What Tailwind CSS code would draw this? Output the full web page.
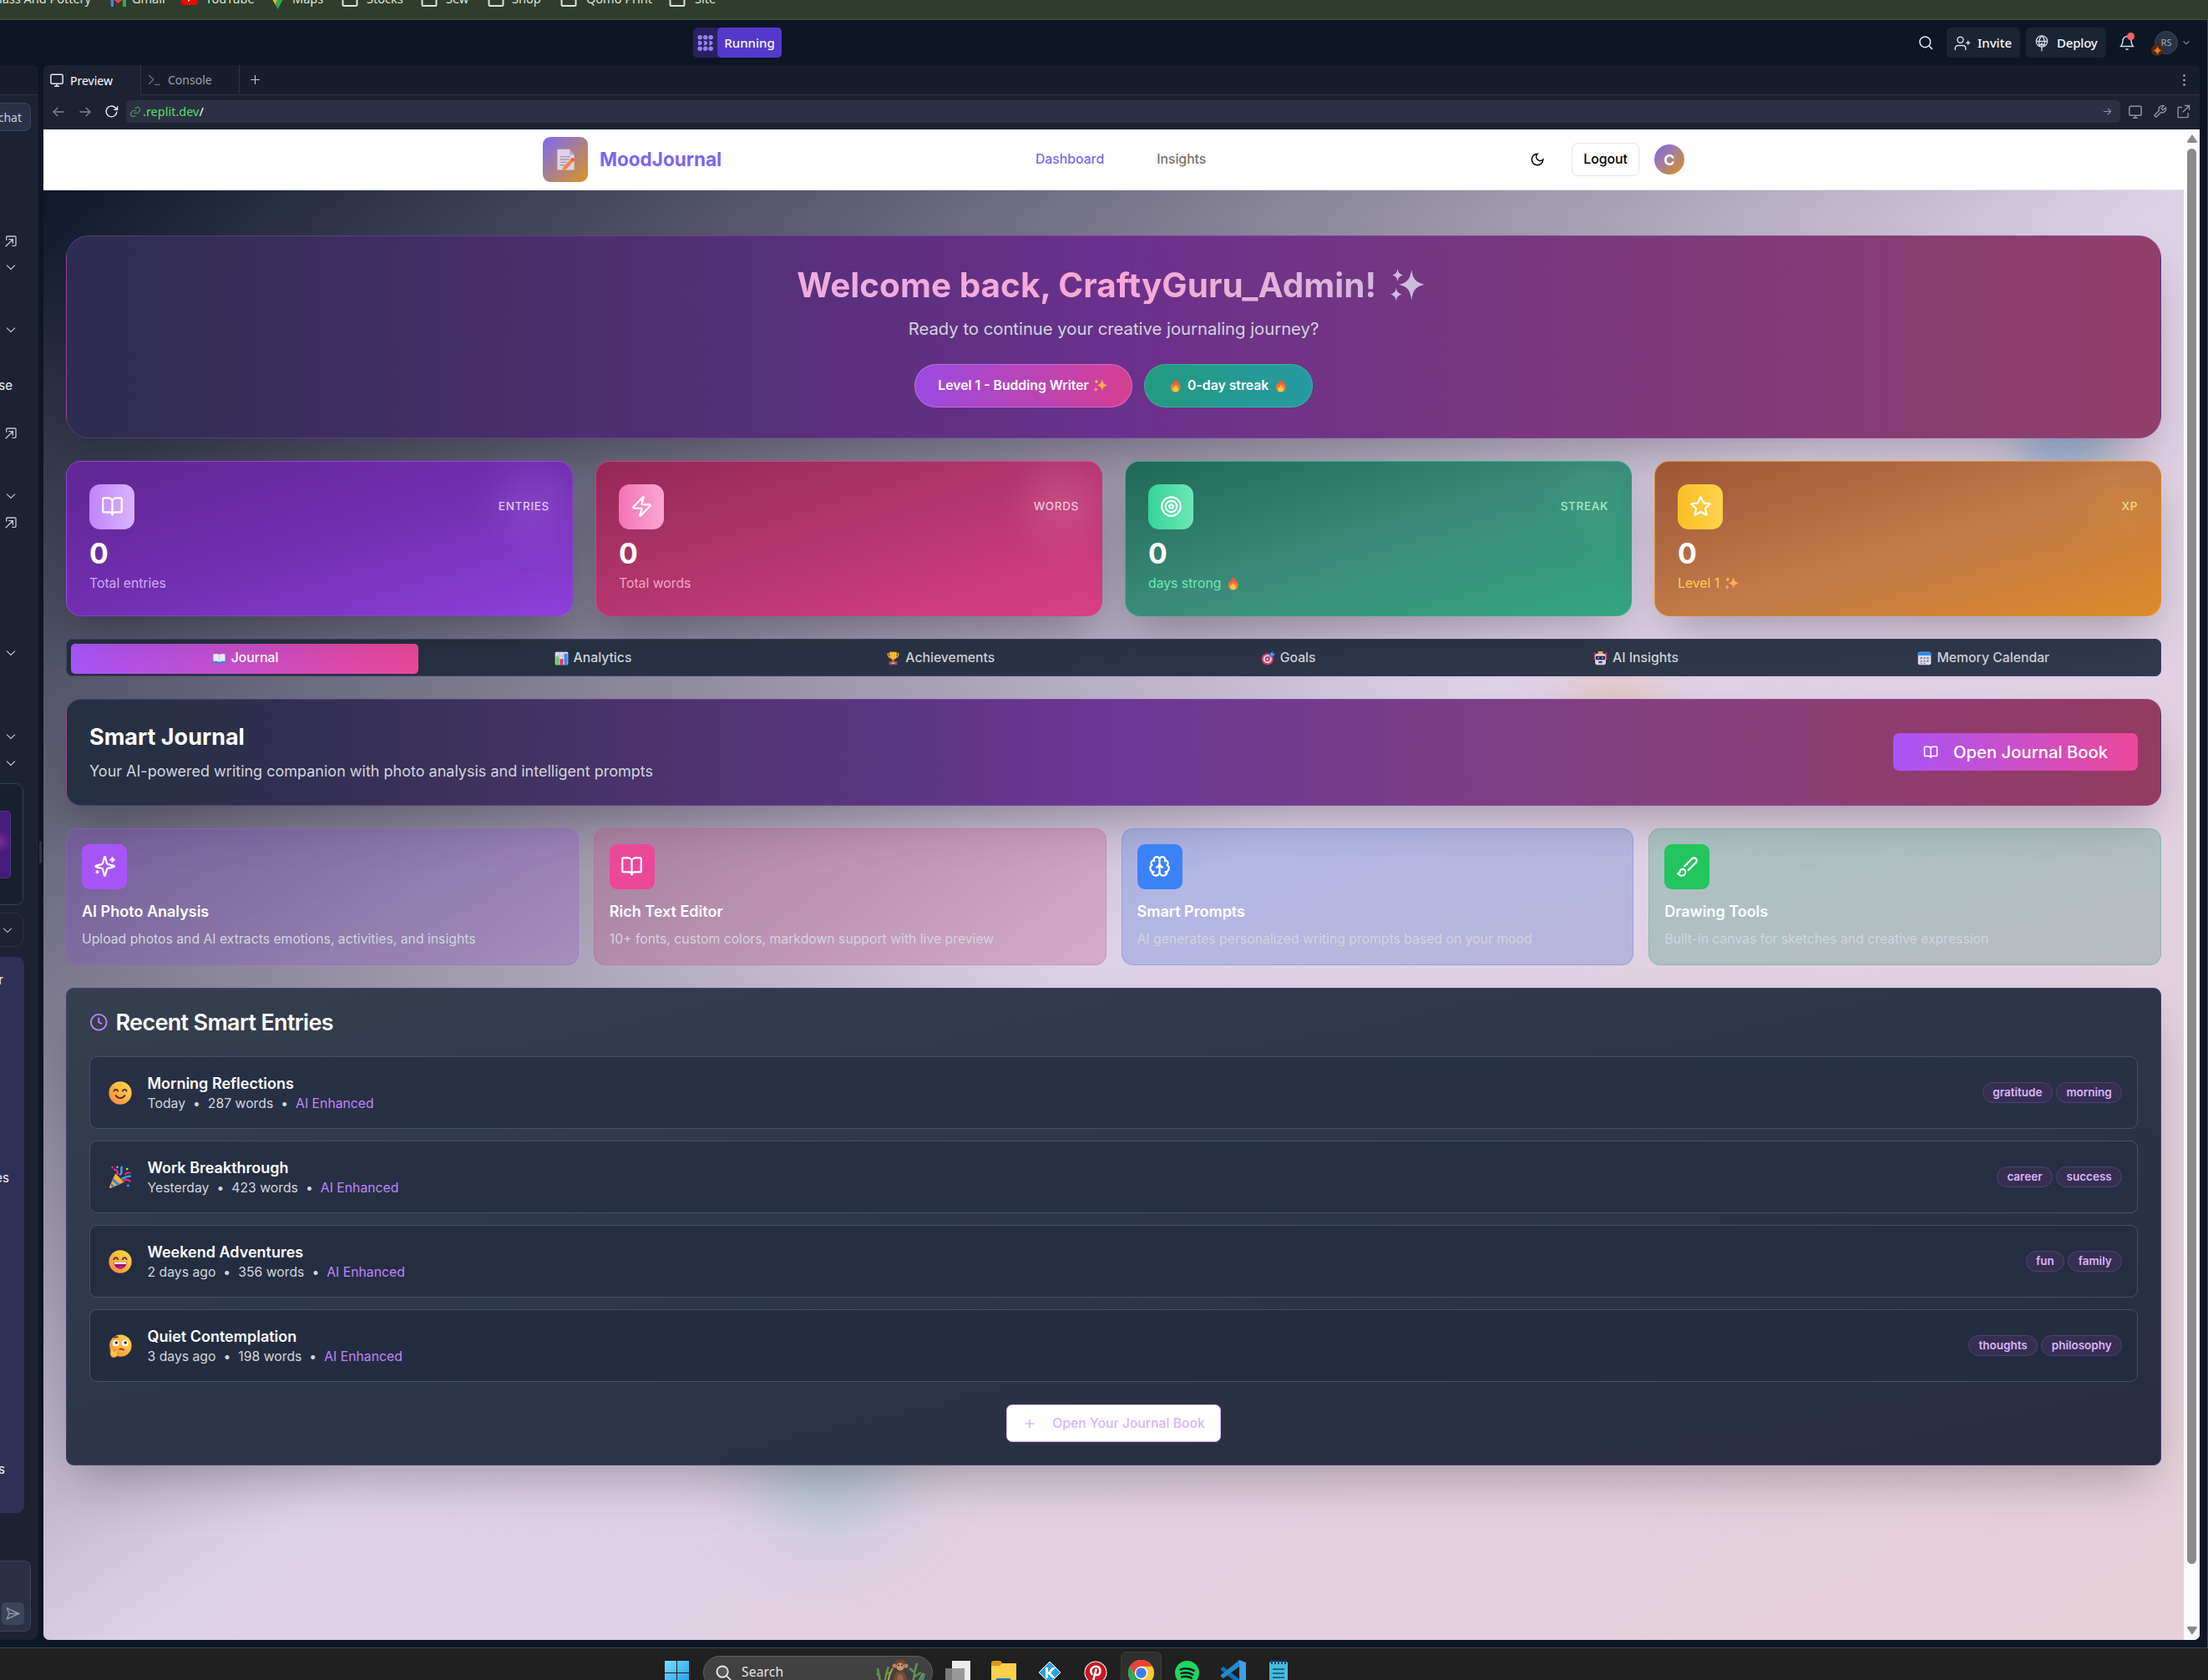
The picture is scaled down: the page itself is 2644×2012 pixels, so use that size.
<!DOCTYPE html>
<html lang="en" class="text-[18px]">
<head>
<meta charset="utf-8">
<title>MoodJournal</title>
<script src="https://cdn.jsdelivr.net/npm/@tailwindcss/browser@4"></script>
</head>
<body class="w-[2644px] h-[2012px] overflow-hidden bg-[#0e1525] font-['Inter',sans-serif]">

<svg class="absolute w-0 h-0">
  <defs>
    <linearGradient id="gFire" x1="0" y1="0" x2="0" y2="1"><stop offset="0" stop-color="#e8453c"/><stop offset="1" stop-color="#ff9a2e"/></linearGradient>
    <linearGradient id="gFace" x1="1" y1="0" x2="0" y2="1"><stop offset="0" stop-color="#ffe04a"/><stop offset=".6" stop-color="#ffab3c"/><stop offset="1" stop-color="#f37a4e"/></linearGradient>
    <linearGradient id="gSpark" x1="0" y1="0" x2="0" y2="1"><stop offset="0" stop-color="#ffd23a"/><stop offset="1" stop-color="#ff8a6a"/></linearGradient>
    <linearGradient id="gWin" gradientUnits="userSpaceOnUse" x1="0" y1="0" x2="29" y2="29"><stop offset="0" stop-color="#7fdcff"/><stop offset="1" stop-color="#1a9bef"/></linearGradient>
    <linearGradient id="gTitle" x1="0" y1="0" x2="1" y2="0"><stop offset="0" stop-color="#d0badf"/><stop offset="1" stop-color="#cabde2"/></linearGradient>
  </defs>
  <symbol id="star4" viewBox="0 0 24 24"><path d="M15 1.500c1 6.500 2.500 8.500 8.700 10.300C17.500 13.500 16 15.500 15 22.500 14 15.500 12.500 13.500 6.500 11.800 12.500 10.200 14 8 15 1.500z"/><path d="M5.500 1c.5 2.800 1 3.500 3.600 4.400-2.600.9-3.100 1.700-3.600 4.400-.5-2.700-1-3.500-3.500-4.400C4.500 4.500 5 3.800 5.500 1zM4.500 14c.5 2.900 1.200 3.600 3.900 4.600-2.700.9-3.400 1.700-3.900 4.500-.5-2.800-1.200-3.600-3.900-4.500C3.300 17.600 4 16.900 4.500 14z"/></symbol>
  <symbol id="fire" viewBox="0 0 24 24"><path fill="url(#gFire)" d="M13 1c1 4 7 7 7 14a8 8 0 0 1-16 0c0-3 1-5.500 2.500-7 .2 1.500.8 2.500 1.500 3C8 7 10 3 13 1z"/><path fill="#ffc83a" d="M12.500 11c.5 2.500 4 3.500 4 7a4.500 4.500 0 0 1-9 0c0-1.800 1-3 2-4 .3.800.7 1.300 1.200 1.500 0-1.800.8-3.500 1.800-4.500z"/></symbol>
  <symbol id="bookE" viewBox="0 0 24 24"><path fill="#2b8fe0" d="M1 6h22v14H1z"/><path fill="#eef0f8" d="M2 5c4-1 7-1 10 .8C15 4 18 4 22 5v12c-4-.8-7-.8-10 1-3-1.800-6-1.800-10-1z"/><path stroke="#c3c7da" d="M12 6v12"/></symbol>
  <symbol id="chart" viewBox="0 0 24 24"><rect x="1" y="1" width="22" height="22" rx="2" fill="#e3def0"/><path stroke="#b9b2cc" stroke-width="1" d="M1 8h22M1 15h22M8.500 1v22M15.500 1v22"/><path fill="#6bcf5a" d="M2 9h5.500v14H2z"/><path fill="#e5396b" d="M9 13h5.500v10H9z"/><path fill="#2f8ff0" d="M16.500 4H22v19h-5.500z"/></symbol>
  <symbol id="trophy" viewBox="0 0 24 24"><path fill="none" stroke="#f5a623" stroke-width="2" d="M6 4H3c0 4 1 6 5 7M18 4h3c0 4-1 6-5 7"/><path fill="#fcc02e" d="M6 1h12v6c0 4-2.500 7-6 7s-6-3-6-7z"/><path fill="#e8902a" d="M10.500 13h3v4h-3z"/><path fill="#a0506a" d="M5 17h14v6H5z"/><path fill="#fcc02e" d="M9 19h6v2H9z"/></symbol>
  <symbol id="targetE" viewBox="0 0 24 24"><circle cx="11" cy="13" r="10" fill="#e23a66"/><circle cx="11" cy="13" r="7" fill="#f0e4f2"/><circle cx="11" cy="13" r="4.500" fill="#e23a66"/><circle cx="11" cy="13" r="1.800" fill="#fff"/><path stroke="#2f8ff0" stroke-width="2.500" d="M11 13l8-8"/><path fill="#3fa5f5" d="M16 3l4-3v4h4l-3 4-5-1z"/></symbol>
  <symbol id="robot" viewBox="0 0 24 24"><path fill="#f5b52a" d="M8 0h8v4H8z"/><path fill="#e2325e" d="M1 2h3v12H1zM20 2h3v12h-3z"/><rect x="3" y="4" width="18" height="19" rx="4" fill="#ddd5ec"/><rect x="4" y="8" width="16" height="6.500" rx="2" fill="#2c2846"/><path fill="#3aa7f5" d="M7 10h3v2.500H7zM14 10h3v2.500h-3z"/><path fill="#443a5c" d="M9 17h6v3H9z"/></symbol>
  <symbol id="cal" viewBox="0 0 24 24"><rect x="1" y="1" width="22" height="22" rx="3" fill="#e6e0f3"/><path fill="#2f92f5" d="M1 7V4a3 3 0 0 1 3-3h16a3 3 0 0 1 3 3v3z"/><path fill="#8d86a8" d="M5 10h3v3H5zM10.500 10h3v3h-3zM16 10h3v3h-3zM5 15h3v3H5zM10.500 15h3v3h-3zM5 19.500h3v2H5zM10.500 19.500h3v2h-3z"/><path fill="#2f92f5" d="M16 15h3v3h-3z"/></symbol>
  <symbol id="memo" viewBox="0 0 24 24"><path fill="#ddd3e4" d="M3 1h13l5 6v16H3z"/><path fill="#b7aac4" d="M16 1l5 6h-5z"/><path stroke="#a497b4" stroke-width="1.200" d="M6 9h11M6 12h10M6 15h7M6 18h5"/><path fill="#fb8445" d="M19 10l3 2-9 10-5 1.500L10 19z"/><path fill="#f0583c" d="M19 10l3 2-2 2.300-3-2z"/></symbol>
  <symbol id="smile" viewBox="0 0 24 24"><circle cx="12" cy="12" r="11.700" fill="url(#gFace)"/><path fill="none" stroke="#4b2e3a" stroke-width="1.600" stroke-linecap="round" d="M5.500 10c.5-2 3.500-2 4 0M14.500 10c.5-2 3.500-2 4 0M7.500 14.500c2 3.500 7 3.500 9 0"/></symbol>
  <symbol id="laugh" viewBox="0 0 24 24"><circle cx="12" cy="12" r="11.700" fill="url(#gFace)"/><path fill="none" stroke="#4b2e3a" stroke-width="1.600" stroke-linecap="round" d="M5.500 9.500c.5-2.200 3.500-2.200 4 0M14.500 9.500c.5-2.200 3.500-2.200 4 0"/><path fill="#9c1668" d="M5.500 12.500h13c0 4-3 7-6.500 7s-6.500-3-6.500-7z"/><path fill="#fff" d="M6 12.500h12v2H6z"/><path fill="#d0208a" d="M8.500 18c2-2 5-2 7 0-2 2-5 2-7 0z"/></symbol>
  <symbol id="think" viewBox="0 0 24 24"><circle cx="12.300" cy="11.700" r="11.300" fill="url(#gFace)"/><circle cx="7.500" cy="9" r="3.300" fill="#fff"/><circle cx="16.800" cy="9" r="3.300" fill="#fff"/><circle cx="8" cy="8.500" r="1.500" fill="#3c2a36"/><circle cx="17.300" cy="8.500" r="1.500" fill="#3c2a36"/><path fill="none" stroke="#4b2e3a" stroke-width="1.300" stroke-linecap="round" d="M6 3.600c1-1 2.500-1.200 3.500-.8M10.500 16c1.500-1.500 3.800-1.300 5 .2"/><path fill="#ffc542" stroke="#e98a35" stroke-width=".7" d="M2 15.500c0-1.800 2.200-1.800 2.400 0l.6 2 5-2c1.500-.5 2.200 1.300.8 2l-2.300 1.300c1.500.7 1 4.200-2.500 4.700-3 .3-4-1.500-4-4z"/></symbol>
  <symbol id="party" viewBox="0 0 24 24"><path fill="#fbb130" d="M7 8l9 9-13.500 6c-1 .4-2-.5-1.500-1.500z"/><path fill="#4a7fe0" d="M5 13l7 6-3 1.400-5.300-4.600zM3 18l3.500 3.500-2.500 1L2 20.500z"/><path fill="none" stroke="#e32c86" stroke-width="2" stroke-linecap="round" d="M9 9c1-3-1-5-3-5M15 16c2-2 5-2 7 0"/><path fill="none" stroke="#e32c86" stroke-width="1.800" stroke-linecap="round" d="M17 9c1-1.500 3-2 5-1.500"/><path fill="none" stroke="#3a9df0" stroke-width="2.200" stroke-linecap="round" d="M12 9c3-2 0-4 1.500-7.500M14 13c3 0 3-2.500 8-2"/><circle cx="4" cy="1.800" r="1.200" fill="#e32c86"/><circle cx="19" cy="3.500" r="1.200" fill="#fbc530"/><circle cx="20" cy="20.500" r="1.200" fill="#3a9df0"/><circle cx="9" cy="1.500" r="1" fill="#fbc530"/></symbol>

  <symbol id="book" viewBox="0 0 24 24"><path d="M12 7v14M3 18a1 1 0 0 1-1-1V4a1 1 0 0 1 1-1h5a4 4 0 0 1 4 4 4 4 0 0 1 4-4h5a1 1 0 0 1 1 1v13a1 1 0 0 1-1 1h-6a3 3 0 0 0-3 3 3 3 0 0 0-3-3z"/></symbol>
  <symbol id="chev" viewBox="0 0 24 24"><path d="m3.500 8 8.500 8 8.500-8"/></symbol>
  <symbol id="openin" viewBox="0 0 24 24"><path d="M4 10V4.500A1.500 1.500 0 0 1 5.500 3h14A1.500 1.500 0 0 1 21 4.500v14a1.500 1.500 0 0 1-1.500 1.500H14M2.500 21.500l13-13M8 8.500h7.500V16"/></symbol>
  <symbol id="monitor" viewBox="0 0 24 24"><rect x="2.500" y="3" width="19" height="14.500" rx="2"/><path d="M12 17.500V21.500M8 21.500h8"/></symbol>
  <symbol id="folder" viewBox="0 0 20 18"><path d="M1.500 14.500V2H8l2 2h8.500v10.500a1.500 1.500 0 0 1-1.500 1.500H3a1.500 1.500 0 0 1-1.500-1.500z"/></symbol>
</svg>

<!-- bookmarks bar -->
<div class="h-[24px] bg-[#303d2d] border-b border-[#43513f] overflow-hidden font-['Noto_Sans',sans-serif] text-[14.5px] text-[#dfe4d8]">
  <div class="flex items-center h-[24px] -mt-[14px] whitespace-nowrap leading-[24px]">
    <div class="w-[132px] shrink-0 pr-[23px] flex justify-end overflow-hidden"><span>Glass And Pottery</span></div>
    <div class="w-[85px] shrink-0 flex gap-[7px] items-center"><svg class="w-[19px] h-[16px] mt-[3px]" viewBox="0 0 19 16"><path fill="#4285f4" d="M0 2h4v14H1z"/><path fill="#34a853" d="M15 2h4v14h-4z"/><path fill="#ea4335" d="M2 1l7.500 6L17 1v5l-7.500 6L2 6z"/></svg><span>Gmail</span></div>
    <div class="w-[109px] shrink-0 flex gap-[9px] items-center"><svg class="w-[20px] h-[15px] mt-[1px]" viewBox="0 0 20 15"><rect width="20" height="15" rx="4" fill="#f00"/><path fill="#fff" d="M8 4l5 3.500L8 11z"/></svg><span>YouTube</span></div>
    <div class="w-[83px] shrink-0 flex gap-[11px] items-center"><svg class="w-[13px] h-[20px] mt-[5px]" viewBox="0 0 13 20"><path fill="#34a853" d="M0 8h13L6.500 20z"/><path fill="#fbbc04" d="M0 8l6 0-2.500 6z"/></svg><span>Maps</span></div>
    <div class="w-[95px] shrink-0 flex gap-[10px] items-center"><svg class="w-[20px] h-[18px] mt-[3px] fill-none stroke-[#dfe4d8] stroke-2"><use href="#folder"/></svg><span>Stocks</span></div>
    <div class="w-[80px] shrink-0 flex gap-[10px] items-center"><svg class="w-[20px] h-[18px] mt-[3px] fill-none stroke-[#dfe4d8] stroke-2"><use href="#folder"/></svg><span>Sew</span></div>
    <div class="w-[87px] shrink-0 flex gap-[9px] items-center"><svg class="w-[20px] h-[18px] mt-[3px] fill-none stroke-[#dfe4d8] stroke-2"><use href="#folder"/></svg><span>Shop</span></div>
    <div class="w-[130px] shrink-0 flex gap-[11px] items-center"><svg class="w-[20px] h-[18px] mt-[3px] fill-none stroke-[#dfe4d8] stroke-2"><use href="#folder"/></svg><span>Qomo Print</span></div>
    <div class="shrink-0 flex gap-[11px] items-center"><svg class="w-[20px] h-[18px] mt-[3px] fill-none stroke-[#dfe4d8] stroke-2"><use href="#folder"/></svg><span>Site</span></div>
  </div>
</div>

<!-- workspace header -->
<div class="h-[54px] flex items-center justify-between pl-[830px] pr-[20px] border-r border-[#3a4a48] font-['Noto_Sans',sans-serif] text-[15px] font-medium text-[#f5f9fc]">
  <div class="h-[36px] w-[106px] rounded-[5px] bg-[#2a2160] flex">
    <div class="w-[29px] flex items-center justify-center"><svg class="w-[19px] h-[19px] fill-[#9580f5]" viewBox="0 0 18 18"><ellipse cx="3" cy="2.700" rx="2.600" ry="2.600"/><ellipse cx="9.200" cy="2.700" rx="2.600" ry="2.600"/><ellipse cx="15.300" cy="2.700" rx="2.600" ry="2.600"/><path d="M1 6.500c3 0 4.500 1 4.500 2.500S4 11.500 1 11.500zM7 6.300c3 0 4.600 1.200 4.600 2.700S10 11.700 7 11.700c1.200-1.800 1.200-3.600 0-5.400zM13 6.300c3 0 4.600 1.200 4.600 2.700s-1.600 2.700-4.600 2.700c1.200-1.800 1.200-3.600 0-5.400z"/><ellipse cx="3" cy="15.300" rx="2.600" ry="2.600"/><ellipse cx="9.200" cy="15.300" rx="2.600" ry="2.600"/><ellipse cx="15.300" cy="15.300" rx="2.600" ry="2.600"/></svg></div>
    <div class="flex-1 rounded-[5px] bg-[#5438cc] flex items-center justify-center pt-[1px]">Running</div>
  </div>
  <div class="flex items-center h-[36px]">
    <svg class="w-[18px] h-[18px] mr-[16px] fill-none stroke-[#e6ebf0] stroke-2" viewBox="0 0 24 24"><circle cx="11" cy="11" r="8.500"/><path d="m17.500 17.500 5 5"/></svg>
    <div class="w-[88px] h-[36px] rounded-[5px] bg-[#1c2333] flex items-center pl-[9px] gap-[8px] pt-[1px]"><svg class="w-[20px] h-[20px] fill-none stroke-[#d5dae2] stroke-[1.8]" viewBox="0 0 24 24"><circle cx="9" cy="7" r="4.200"/><path d="M1.500 21.500v-2.500a4 4 0 0 1 4-4h7a4 4 0 0 1 4 4v2.500M20 8v6M17 11h6"/></svg>Invite</div>
    <div class="ml-[7px] w-[96px] h-[36px] rounded-[5px] bg-[#1c2333] flex items-center pl-[9px] gap-[8px] pt-[1px]"><svg class="w-[20px] h-[20px] fill-none stroke-[#d5dae2] stroke-[1.6]" viewBox="0 0 24 24"><circle cx="12" cy="9" r="8"/><path d="M4 9h16M9 16c-1.500-3-2-10 3-15 5 5 4.500 12 3 15M12 12v11M9 15l3-3 3 3"/></svg><span class="tracking-[-0.2px]">Deploy</span></div>
    <div class="relative ml-[15px] w-[20px] h-[20px]"><svg class="w-[20px] h-[20px] fill-none stroke-[#d5dae2] stroke-[1.8]" viewBox="0 0 24 24"><path d="M6 9a6 6 0 0 1 12 0c0 6 2 7 3 8.500H3C4 16 6 15 6 9M10 21.500h4"/></svg><div class="absolute left-[10px] -top-[2px] w-[9px] h-[9px] rounded-full bg-[#ff6166]"></div></div>
    <div class="relative ml-[23px] w-[28px] h-[28px] rounded-full bg-[#2b3245] border border-[#3c445c] text-[11px] font-normal text-[#a2acbb] flex items-center justify-center">RS<div class="absolute -left-[5px] top-[15px] w-[14px] h-[14px] rounded-full bg-[#54270c] flex items-center justify-center"><svg class="w-[11px] h-[11px] fill-[#ff7a1a]" viewBox="0 0 10 10"><path d="M5 0q.6 4.400 5 5-4.400.6-5 5Q4.400 5.600 0 5 4.400 4.400 5 0z"/></svg></div></div>
    <svg class="ml-[5px] w-[10px] h-[10px] fill-none stroke-[#8b93a5] stroke-[2.5]"><use href="#chev"/></svg>
  </div>
</div>

<!-- workspace body -->
<div class="h-[1886px] flex">
  <!-- agent sidebar -->
  <div class="w-[46px] h-full shrink-0 overflow-hidden rounded-tr-[6px] rounded-br-[9px] bg-[#1c2232] text-[#f0f3f7] text-[15px]">
    <div class="h-[36px] bg-[#181d2c] border-b border-[#2b3245]"></div>
    <div class="mt-[9px] w-[37px] h-[34px] rounded-r-[8px] border border-l-0 border-[#3c445c] bg-[#2b3245] flex items-center justify-end pr-[10px] text-[14px] font-['Noto_Sans',sans-serif] text-[#c8ced8]">chat</div>
    <div class="mt-[121px] h-[22px] pl-[5px] flex items-center"><svg class="w-[16px] h-[16px] fill-none stroke-[#c2c8cc] stroke-2"><use href="#openin"/></svg></div>
    <div class="mt-[9px] h-[22px] pl-[6px] flex items-center"><svg class="w-[14px] h-[14px] fill-none stroke-[#c2c8cc] stroke-2"><use href="#chev"/></svg></div>
    <div class="mt-[53px] h-[22px] pl-[6px] flex items-center"><svg class="w-[14px] h-[14px] fill-none stroke-[#c2c8cc] stroke-2"><use href="#chev"/></svg></div>
    <div class="mt-[45px] mb-px h-[22px] w-[15px] flex items-center justify-end">se</div>
    <div class="mt-[35px] h-[22px] pl-[5px] flex items-center"><svg class="w-[16px] h-[16px] fill-none stroke-[#c2c8cc] stroke-2"><use href="#openin"/></svg></div>
    <div class="mt-[53px] h-[22px] pl-[6px] flex items-center"><svg class="w-[14px] h-[14px] fill-none stroke-[#c2c8cc] stroke-2"><use href="#chev"/></svg></div>
    <div class="mt-[10px] h-[22px] pl-[5px] flex items-center"><svg class="w-[16px] h-[16px] fill-none stroke-[#c2c8cc] stroke-2"><use href="#openin"/></svg></div>
    <div class="mt-[134px] h-[22px] pl-[6px] flex items-center"><svg class="w-[14px] h-[14px] fill-none stroke-[#c2c8cc] stroke-2"><use href="#chev"/></svg></div>
    <div class="mt-[78px] h-[22px] pl-[6px] flex items-center"><svg class="w-[14px] h-[14px] fill-none stroke-[#c2c8cc] stroke-2"><use href="#chev"/></svg></div>
    <div class="mt-[10px] h-[22px] pl-[6px] flex items-center"><svg class="w-[14px] h-[14px] fill-none stroke-[#c2c8cc] stroke-2"><use href="#chev"/></svg></div>
    <div class="mt-[13px] w-[28px] h-[146px] rounded-r-[9px] border border-l-0 border-[#2f4450] bg-[#182030] pt-[32px]"><div class="w-[13px] h-[81px] rounded-r-[5px] border border-l-0 border-[#4c3a7a] bg-[radial-gradient(circle_at_0_45%,#7a2a9a,#451c7c_14px)]"></div></div>
    <div class="mt-[9px] w-[28px] h-[41px] rounded-r-[9px] border border-l-0 border-[#2b3245] flex items-center pl-[2px]"><svg class="w-[14px] h-[14px] fill-none stroke-[#a9b0ba] stroke-2"><use href="#chev"/></svg></div>
    <div class="mt-[12px] w-[29px] h-[666px] rounded-r-[9px] bg-[#2f3057] pt-[17px] flex flex-col leading-[22px]">
      <div class="w-[4px] h-[237px] flex justify-end">r</div>
      <div class="w-[11px] h-[349px] flex justify-end">es</div>
      <div class="w-[6px] flex justify-end">s</div>
    </div>
    <div class="mt-[57px] w-[37px] h-[85px] rounded-r-[8px] border border-l-0 border-[#3c445c] bg-[#2b3142] flex items-end pl-[2px] pb-[7px]"><div class="w-[27px] h-[27px] rounded-[5px] bg-[#3c435c] flex items-center justify-center"><svg class="w-[17px] h-[17px] fill-none stroke-[#8f95a3] stroke-2" viewBox="0 0 24 24"><path d="M2 3l20 9-20 9 3.500-9zM5.500 12H22"/></svg></div></div>
  </div>
  <div class="w-[6px] shrink-0 pt-[929px] pl-[1px]"><div class="w-[3px] h-[27px] rounded-full bg-[#2b3245]"></div></div>

  <!-- preview pane -->
  <div class="w-[2582px] h-full shrink-0 rounded-[7px] overflow-hidden bg-[#1c2232] flex flex-col">
    <div class="h-[36px] shrink-0 flex bg-[#181d2c] font-['Noto_Sans',sans-serif] text-[14px]">
      <div class="w-[117px] bg-[#1c2232] border-r border-[#2b3245] flex items-center pl-[7px] gap-[7px] text-white"><svg class="w-[18px] h-[18px] fill-none stroke-[#e6ebf0] stroke-2"><use href="#monitor"/></svg>Preview</div>
      <div class="w-[118px] border-r border-b border-[#2b3245] flex items-center pl-[8px] gap-[8px] text-[#9aa4b0]"><svg class="w-[16px] h-[16px] fill-none stroke-[#6e6f5f] stroke-2" viewBox="0 0 24 24"><path d="m2 3 8 8-8 8M12 20h10"/></svg>Console</div>
      <div class="flex-1 border-b border-[#2b3245] flex items-center justify-between pl-[13px] pr-[17px]"><svg class="w-[11px] h-[11px] stroke-[#c5cbd4]" viewBox="0 0 10 10"><path d="M5 0v10M0 5h10"/></svg><svg class="w-[3px] h-[14px] fill-[#a9b0ba]" viewBox="0 0 3 14"><circle cx="1.500" cy="1.500" r="1.300"/><circle cx="1.500" cy="7" r="1.300"/><circle cx="1.500" cy="12.500" r="1.300"/></svg></div>
    </div>
    <div class="h-[41px] shrink-0 flex items-center pl-[10px] pr-[11px] pb-[2px]">
      <svg class="w-[16px] h-[16px] fill-none stroke-[#7d8593] stroke-2" viewBox="0 0 24 24"><path d="M22 12H3M11 4l-8 8 8 8"/></svg>
      <svg class="ml-[16px] w-[16px] h-[16px] fill-none stroke-[#7d8593] stroke-2" viewBox="0 0 24 24"><path d="M2 12h19M13 4l8 8-8 8"/></svg>
      <svg class="ml-[15px] w-[17px] h-[17px] fill-none stroke-[#eef1f5] stroke-2" viewBox="0 0 24 24"><path d="M21 12a9 9 0 1 1-2.600-6.400L22 9M22 3v6h-6"/></svg>
      <div class="ml-[9px] w-[2388px] h-[27px] rounded-[5px] bg-[#2b3142] flex items-center pl-[4px] font-['Noto_Sans',sans-serif] text-[14.500px] text-[#5bdc6c]"><svg class="w-[14px] h-[14px] mr-[2px] fill-none stroke-[#4a9a58] stroke-2" viewBox="0 0 24 24"><path d="M10 13a5 5 0 0 0 7.500.5l3-3a5 5 0 0 0-7-7l-1.700 1.700M14 11a5 5 0 0 0-7.500-.5l-3 3a5 5 0 0 0 7 7l1.700-1.700"/></svg>.replit.dev<span class="text-white">/</span><svg class="ml-auto mr-[10px] w-[11px] h-[11px] fill-none stroke-[#8b93a0] stroke-[2.4]" viewBox="0 0 24 24"><path d="M2 12h19M13 4l8 8-8 8"/></svg></div>
      <svg class="ml-auto w-[18px] h-[18px] fill-none stroke-[#8b93a0] stroke-2"><use href="#monitor"/></svg>
      <svg class="ml-[12px] w-[17px] h-[17px] fill-none stroke-[#8b93a0] stroke-2" viewBox="0 0 24 24"><path d="M14.700 6.300a1 1 0 0 0 0 1.400l1.600 1.600a1 1 0 0 0 1.400 0l3.800-3.800a6 6 0 0 1-7.900 7.900l-6.900 6.900a2.100 2.100 0 0 1-3-3l6.900-6.900a6 6 0 0 1 7.900-7.900z"/></svg>
      <svg class="ml-[11px] w-[17px] h-[17px] fill-none stroke-[#8b93a0] stroke-2" viewBox="0 0 24 24"><path d="M14 2h8v8M22 2 11 13M10 5H4a1 1 0 0 0-1 1v15a1 1 0 0 0 1 1h15a1 1 0 0 0 1-1v-7"/></svg>
    </div>

    <div class="h-[1809px] flex bg-white">
      <div class="w-[2563px] shrink-0 h-full overflow-hidden">
        <!-- app header -->
        <header class="h-[73px] border-b border-[#e2e0e4] flex justify-center">
          <div class="w-[1367px] flex items-center justify-between">
            <div class="flex items-center gap-[14px] w-[590px]">
              <div class="w-12 h-12 rounded-[9px] bg-[linear-gradient(135deg,#7c68f8,#d9961e)] flex items-center justify-center"><svg class="w-[27px] h-[30px]"><use href="#memo"/></svg></div>
              <span class="text-xl font-bold text-[#7b66f2]">MoodJournal</span>
            </div>
            <nav class="flex gap-[63px] text-sm font-medium"><span class="text-[#7b66f2]">Dashboard</span><span class="text-[#78716c]">Insights</span></nav>
            <div class="flex-1 flex items-center justify-end">
              <svg class="w-[18px] h-[18px] mr-[32px] fill-none stroke-black stroke-2" viewBox="0 0 24 24"><path d="M12 3a6 6 0 0 0 9 9 9 9 0 1 1-9-9Z"/></svg>
              <div class="w-[81px] h-[40px] rounded-[7px] border border-[#e7e5e6] flex items-center justify-center text-sm font-medium text-black">Logout</div>
              <div class="ml-[18px] w-[36px] h-[36px] rounded-full bg-[linear-gradient(135deg,#7c68f8,#d9961e)] flex items-center justify-center text-[18px] font-bold text-white">C</div>
            </div>
          </div>
        </header>

        <!-- dashboard -->
        <main class="relative isolate h-[1808px] bg-[linear-gradient(to_bottom_right,#0f172a,rgb(88_28_135/0.2),rgb(136_19_55/0.2))] pt-12 px-6 flex flex-col gap-6">
          <div class="absolute -z-10 left-[2364px] top-[246px] w-[112px] h-[112px] rounded-full bg-[#5aa0d8]/40 blur-[24px]"></div>
          <div class="absolute -z-10 left-[1821px] top-[572px] w-[120px] h-[120px] rounded-full bg-[#e8a04a]/25 blur-[30px]"></div>
          <div class="absolute -z-10 left-[849px] top-[1430px] w-[180px] h-[180px] rounded-full bg-[#5aacac]/30 blur-[45px]"></div>

          <section class="rounded-[27px] border border-[#a855f7]/30 bg-[linear-gradient(to_right,#2d2d50,#6a318c_50%,#90406a)] shadow-[0_28px_56px_-13px_rgb(0_0_0/0.27)] p-8 text-center">
            <h1 class="mb-3 text-4xl font-bold text-transparent bg-clip-text bg-[linear-gradient(to_right,#d8b4fe,#f9a8d4,#67e8f9)]">Welcome back, CraftyGuru_Admin! <svg class="inline-block w-[44px] h-[42px] mx-[5.500px] -mt-[8px] fill-[url(#gTitle)]"><use href="#star4"/></svg></h1>
            <p class="text-lg text-[#d1d5db]">Ready to continue your creative journaling journey?</p>
            <div class="mt-6 flex justify-center gap-3 text-sm font-semibold text-white">
              <div class="px-6 py-3 rounded-full border border-[#d08af0]/60 bg-[linear-gradient(to_right,#994be0,#d53f92)]">Level 1 - Budding Writer <svg class="inline-block w-[1.1em] h-[1.1em] mx-[0.1em] -mt-[2px] fill-[url(#gSpark)]"><use href="#star4"/></svg></div>
              <div class="px-6 py-3 rounded-full border border-[#3fc9a5]/60 bg-[linear-gradient(to_right,#249a80,#279aa2)]"><svg class="inline-block w-[1.1em] h-[1.1em] mx-[0.1em] -mt-[2px]"><use href="#fire"/></svg> 0-day streak <svg class="inline-block w-[1.1em] h-[1.1em] mx-[0.1em] -mt-[2px]"><use href="#fire"/></svg></div>
            </div>
          </section>

          <section class="grid grid-cols-4 gap-6">
            <div class="relative rounded-[18px] border border-[#a855f7]/50 bg-[linear-gradient(to_bottom_right,#602693,#712fb0_50%,#9040da)] shadow-[0_28px_56px_-13px_rgb(0_0_0/0.27)] p-6">
              <div class="absolute right-[8px] top-[10px] w-[80px] h-[80px] rounded-full bg-[#c084fc]/20 blur-[22px]"></div>
              <div class="flex items-center justify-between mb-2"><div class="w-12 h-12 rounded-[13px] bg-[linear-gradient(to_right,#c084fc,#d8b4fe)] flex items-center justify-center"><svg class="w-6 h-6 fill-none stroke-white stroke-2 [stroke-linecap:round] [stroke-linejoin:round]"><use href="#book"/></svg></div><span class="relative text-xs font-medium tracking-wider text-[#e0c8fb]">ENTRIES</span></div>
              <div class="text-3xl font-bold text-white mb-1">0</div><div class="text-sm text-[#d3a9f6]">Total entries</div>
            </div>
            <div class="relative rounded-[18px] border border-[#ec4899]/50 bg-[linear-gradient(to_bottom_right,#942855,#b4376e_50%,#d94085)] shadow-[0_28px_56px_-13px_rgb(0_0_0/0.27)] p-6">
              <div class="absolute right-[8px] top-[10px] w-[80px] h-[80px] rounded-full bg-[#f0a0c8]/20 blur-[22px]"></div>
              <div class="flex items-center justify-between mb-2"><div class="w-12 h-12 rounded-[13px] bg-[linear-gradient(to_right,#f472b6,#f9a8d4)] flex items-center justify-center"><svg class="w-6 h-6 fill-none stroke-white stroke-2 [stroke-linecap:round] [stroke-linejoin:round]" viewBox="0 0 24 24"><path d="M4 14a1 1 0 0 1-.78-1.630l9.900-10.200a.5.5 0 0 1 .86.460l-1.920 6.020A1 1 0 0 0 13 10h7a1 1 0 0 1 .78 1.630l-9.900 10.200a.5.5 0 0 1-.86-.460l1.920-6.020A1 1 0 0 0 11 14z"/></svg></div><span class="relative text-xs font-medium tracking-wider text-[#f6c5dd]">WORDS</span></div>
              <div class="text-3xl font-bold text-white mb-1">0</div><div class="text-sm text-[#f3a3c9]">Total words</div>
            </div>
            <div class="relative rounded-[18px] border border-[#34c796]/50 bg-[linear-gradient(to_bottom_right,#206855,#3a8b79_50%,#34a680)] shadow-[0_28px_56px_-13px_rgb(0_0_0/0.27)] p-6">
              <div class="absolute right-[8px] top-[10px] w-[80px] h-[80px] rounded-full bg-[#4fc090]/20 blur-[22px]"></div>
              <div class="flex items-center justify-between mb-2"><div class="w-12 h-12 rounded-[13px] bg-[linear-gradient(to_right,#34d399,#6ee7b7)] flex items-center justify-center"><svg class="w-6 h-6 fill-none stroke-white stroke-2" viewBox="0 0 24 24"><circle cx="12" cy="12" r="10"/><circle cx="12" cy="12" r="6"/><circle cx="12" cy="12" r="2"/></svg></div><span class="relative text-xs font-medium tracking-wider text-[#a4ecca]">STREAK</span></div>
              <div class="text-3xl font-bold text-white mb-1">0</div><div class="text-sm text-[#6ee7b7]">days strong <svg class="inline-block w-[1.1em] h-[1.1em] mx-[0.1em] -mt-[2px]"><use href="#fire"/></svg></div>
            </div>
            <div class="relative rounded-[18px] border border-[#f0a020]/60 bg-[linear-gradient(to_bottom_right,#9c5634,#c0784a_50%,#dc8b2a)] shadow-[0_28px_56px_-13px_rgb(0_0_0/0.27)] p-6">
              <div class="absolute right-[8px] top-[10px] w-[80px] h-[80px] rounded-full bg-[#e8a038]/25 blur-[24px]"></div>
              <div class="flex items-center justify-between mb-2"><div class="w-12 h-12 rounded-[13px] bg-[linear-gradient(to_right,#fbbf24,#fcd34d)] flex items-center justify-center"><svg class="w-6 h-6 fill-none stroke-white stroke-2 [stroke-linejoin:round]" viewBox="0 0 24 24"><path d="M12 2l3.090 6.260L22 9.270l-5 4.870 1.180 6.880L12 17.770l-6.180 3.250L7 14.140 2 9.270l6.910-1.010z"/></svg></div><span class="relative text-xs font-medium tracking-wider text-[#f8da80]">XP</span></div>
              <div class="text-3xl font-bold text-white mb-1">0</div><div class="text-sm text-[#fbd04a]">Level 1 <svg class="inline-block w-[1.1em] h-[1.1em] mx-[0.1em] -mt-[2px] fill-[url(#gSpark)]"><use href="#star4"/></svg></div>
            </div>
          </section>

          <section class="h-10 rounded-[7px] border border-[#43406a] bg-[linear-gradient(to_right,#252e3e,#2c3547_50%,#32394d)] p-1 grid grid-cols-6 items-start text-sm font-medium text-[#d1d5db]">
            <div class="h-8 rounded-[5px] bg-[linear-gradient(to_right,#a855f7,#ec4899)] flex items-center justify-center gap-[4px] text-white"><svg class="w-[17px] h-[17px] mx-[2px]"><use href="#bookE"/></svg>Journal</div>
            <div class="h-8 flex items-center justify-center gap-[4px]"><svg class="w-[17px] h-[17px] mx-[2px]"><use href="#chart"/></svg>Analytics</div>
            <div class="h-8 flex items-center justify-center gap-[4px]"><svg class="w-[17px] h-[17px] mx-[2px]"><use href="#trophy"/></svg>Achievements</div>
            <div class="h-8 flex items-center justify-center gap-[4px]"><svg class="w-[17px] h-[17px] mx-[2px]"><use href="#targetE"/></svg>Goals</div>
            <div class="h-8 flex items-center justify-center gap-[4px]"><svg class="w-[17px] h-[17px] mx-[2px]"><use href="#robot"/></svg>AI Insights</div>
            <div class="h-8 flex items-center justify-center gap-[4px]"><svg class="w-[17px] h-[17px] mx-[2px]"><use href="#cal"/></svg>Memory Calendar</div>
          </section>

          <section class="rounded-[18px] border border-[#a855f7]/30 bg-[linear-gradient(to_right,#24303f,#2d2f4b_8%,#6b3893_50%,#83407f_75%,#963a60)] shadow-[0_28px_56px_-13px_rgb(0_0_0/0.27)] p-6 flex items-center justify-between">
            <div><h2 class="text-2xl font-bold text-white mb-2">Smart Journal</h2><p class="text-base text-[#d1d5db]">Your AI-powered writing companion with photo analysis and intelligent prompts</p></div>
            <div class="h-10 px-8 rounded-[7px] bg-[linear-gradient(to_right,#a855f7,#ec4899)] flex items-center gap-4 text-lg font-medium text-white"><svg class="w-4 h-4 fill-none stroke-white stroke-2"><use href="#book"/></svg>Open Journal Book</div>
          </section>

          <section class="grid grid-cols-4 gap-4">
            <div class="rounded-[14px] border border-[#a060e0]/40 bg-[linear-gradient(to_bottom_right,rgb(140_70_225/0.27),rgb(140_79_202/0.25))] bg-origin-border p-4">
              <div class="w-12 h-12 mb-3 rounded-[9px] bg-[#a855f7] flex items-center justify-center"><svg class="w-6 h-6 fill-none stroke-white stroke-2 [stroke-linecap:round] [stroke-linejoin:round]" viewBox="0 0 24 24"><path d="M9.937 15.500A2 2 0 0 0 8.500 14.063l-6.135-1.582a.5.5 0 0 1 0-.962L8.500 9.936A2 2 0 0 0 9.937 8.500l1.582-6.135a.5.5 0 0 1 .963 0L14.063 8.500A2 2 0 0 0 15.500 9.937l6.135 1.581a.5.5 0 0 1 0 .964L15.500 14.063a2 2 0 0 0-1.437 1.437l-1.582 6.135a.5.5 0 0 1-.963 0zM20 3v4M22 5h-4M4 17v2M5 18H3"/></svg></div>
              <h3 class="text-base font-semibold text-white mb-2">AI Photo Analysis</h3><p class="text-sm text-[#d1d5db]">Upload photos and AI extracts emotions, activities, and insights</p>
            </div>
            <div class="rounded-[14px] border border-[#e0508c]/30 bg-[linear-gradient(to_bottom_right,rgb(199_68_122/0.25),rgb(176_56_115/0.25))] bg-origin-border p-4">
              <div class="w-12 h-12 mb-3 rounded-[9px] bg-[#ec4899] flex items-center justify-center"><svg class="w-6 h-6 fill-none stroke-white stroke-2 [stroke-linecap:round] [stroke-linejoin:round]"><use href="#book"/></svg></div>
              <h3 class="text-base font-semibold text-white mb-2">Rich Text Editor</h3><p class="text-sm text-[#d1d5db]">10+ fonts, custom colors, markdown support with live preview</p>
            </div>
            <div class="rounded-[14px] border border-[#6a90e8]/50 bg-[linear-gradient(to_bottom_right,rgb(55_105_225/0.25),rgb(63_98_195/0.25))] bg-origin-border p-4">
              <div class="w-12 h-12 mb-3 rounded-[9px] bg-[#3b82f6] flex items-center justify-center"><svg class="w-6 h-6 fill-none stroke-white stroke-2 [stroke-linecap:round] [stroke-linejoin:round]" viewBox="0 0 24 24"><path d="M12 5a3 3 0 1 0-5.997.125 4 4 0 0 0-2.526 5.770 4 4 0 0 0 .556 6.588A4 4 0 1 0 12 18ZM12 5a3 3 0 1 1 5.997.125 4 4 0 0 1 2.526 5.770 4 4 0 0 1-.556 6.588A4 4 0 1 1 12 18ZM15 13a4.500 4.500 0 0 1-3-4 4.500 4.500 0 0 1-3 4M17.599 6.500a3 3 0 0 0 .399-1.375M6.003 5.125A3 3 0 0 0 6.401 6.500M3.477 10.896a4 4 0 0 1 .585-.396M19.938 10.500a4 4 0 0 1 .585.396M6 18a4 4 0 0 1-1.967-.516M19.967 17.484A4 4 0 0 1 18 18"/></svg></div>
              <h3 class="text-base font-semibold text-white mb-2">Smart Prompts</h3><p class="text-sm text-[#d1d5db]">AI generates personalized writing prompts based on your mood</p>
            </div>
            <div class="rounded-[14px] border border-[#50b080]/40 bg-[linear-gradient(to_bottom_right,rgb(30_155_105/0.27),rgb(60_120_106/0.25))] bg-origin-border p-4">
              <div class="w-12 h-12 mb-3 rounded-[9px] bg-[#22c55e] flex items-center justify-center"><svg class="w-6 h-6 fill-none stroke-white stroke-2 [stroke-linecap:round] [stroke-linejoin:round]" viewBox="0 0 24 24"><path d="m9.060 11.900 8.070-8.060a2.850 2.850 0 1 1 4.030 4.030l-8.060 8.080M7.070 14.940c-1.660 0-3 1.350-3 3.020 0 1.330-2.500 1.520-2 2.020 1.080 1.100 2.490 2.020 4 2.020 2.200 0 4-1.800 4-4.040a3.010 3.010 0 0 0-3-3.020z"/></svg></div>
              <h3 class="text-base font-semibold text-white mb-2">Drawing Tools</h3><p class="text-sm text-[#d1d5db]">Built-in canvas for sketches and creative expression</p>
            </div>
          </section>

          <section class="rounded-[9px] border border-[#463f6b] bg-[linear-gradient(to_bottom_right,#363f4e,#2d3648_50%,#272b3f)] shadow-[0_28px_56px_-13px_rgb(0_0_0/0.27)] p-6">
            <div class="flex items-center gap-2 mb-6 text-2xl leading-none font-semibold tracking-tight text-white"><svg class="w-5 h-5 fill-none stroke-[#c084fc] stroke-2" viewBox="0 0 24 24"><circle cx="12" cy="12" r="10"/><path d="M12 6v6l4 2"/></svg>Recent Smart Entries</div>
            <div class="flex flex-col gap-3 text-sm text-[#d1d5db]">
              <div class="rounded-[9px] border border-[#465063] bg-[#273044] p-4 flex items-center">
                <svg class="w-[28px] h-[28px] ml-[4px] mr-[18.500px]"><use href="#smile"/></svg>
                <div><div class="text-base font-semibold text-white">Morning Reflections</div><div class="flex gap-2"><span>Today</span><span>•</span><span>287 words</span><span>•</span><span class="text-[#c084fc]">AI Enhanced</span></div></div>
                <div class="ml-auto flex gap-1 text-xs font-semibold text-[#d8b4fe]"><span class="px-2.5 py-0.5 rounded-full border border-[#503f78] bg-[#362f52]">gratitude</span><span class="px-2.5 py-0.5 rounded-full border border-[#503f78] bg-[#362f52]">morning</span></div>
              </div>
              <div class="rounded-[9px] border border-[#465063] bg-[#262f43] p-4 flex items-center">
                <svg class="w-[28px] h-[28px] ml-[4px] mr-[18.500px]"><use href="#party"/></svg>
                <div><div class="text-base font-semibold text-white">Work Breakthrough</div><div class="flex gap-2"><span>Yesterday</span><span>•</span><span>423 words</span><span>•</span><span class="text-[#c084fc]">AI Enhanced</span></div></div>
                <div class="ml-auto flex gap-1 text-xs font-semibold text-[#d8b4fe]"><span class="px-2.5 py-0.5 rounded-full border border-[#503f78] bg-[#362f52]">career</span><span class="px-2.5 py-0.5 rounded-full border border-[#503f78] bg-[#362f52]">success</span></div>
              </div>
              <div class="rounded-[9px] border border-[#465063] bg-[#252d41] p-4 flex items-center">
                <svg class="w-[28px] h-[28px] ml-[4px] mr-[18.500px]"><use href="#laugh"/></svg>
                <div><div class="text-base font-semibold text-white">Weekend Adventures</div><div class="flex gap-2"><span>2 days ago</span><span>•</span><span>356 words</span><span>•</span><span class="text-[#c084fc]">AI Enhanced</span></div></div>
                <div class="ml-auto flex gap-1 text-xs font-semibold text-[#d8b4fe]"><span class="px-2.5 py-0.5 rounded-full border border-[#503f78] bg-[#362f52]">fun</span><span class="px-2.5 py-0.5 rounded-full border border-[#503f78] bg-[#362f52]">family</span></div>
              </div>
              <div class="rounded-[9px] border border-[#465063] bg-[#242c40] p-4 flex items-center">
                <svg class="w-[28px] h-[28px] ml-[4px] mr-[18.500px]"><use href="#think"/></svg>
                <div><div class="text-base font-semibold text-white">Quiet Contemplation</div><div class="flex gap-2"><span>3 days ago</span><span>•</span><span>198 words</span><span>•</span><span class="text-[#c084fc]">AI Enhanced</span></div></div>
                <div class="ml-auto flex gap-1 text-xs font-semibold text-[#d8b4fe]"><span class="px-2.5 py-0.5 rounded-full border border-[#503f78] bg-[#362f52]">thoughts</span><span class="px-2.5 py-0.5 rounded-full border border-[#503f78] bg-[#362f52]">philosophy</span></div>
              </div>
            </div>
            <div class="mt-6 flex justify-center"><div class="h-10 px-4 rounded-[7px] border border-[#d8b4fe] bg-white flex items-center gap-4 text-sm font-medium text-[#d8b4fe]"><svg class="w-4 h-4 stroke-[#d8b4fe] stroke-2" viewBox="0 0 24 24"><path d="M5 12h14M12 5v14"/></svg>Open Your Journal Book</div></div>
          </section>
        </main>
      </div>
      <!-- scrollbar -->
      <div class="w-[19px] bg-[#fcfcfc] flex flex-col items-center pt-[6px]">
        <svg class="w-[12px] h-[10px] fill-[#8b8b8b]" viewBox="0 0 12 10"><path d="M6 0l6 8.500q0 1.500-1 1.500H1Q0 10 0 8.500z"/></svg>
        <div class="mt-[7px] w-[11px] h-[1695px] rounded-full bg-[#8b8b8b]"></div>
        <svg class="mt-[75px] w-[12px] h-[10px] fill-[#8b8b8b]" viewBox="0 0 12 10"><path d="M6 10l6-8.500Q12 0 11 0H1Q0 0 0 1.500z"/></svg>
      </div>
    </div>
  </div>
  <div class="flex-1 border-r border-[#3a4a48] -mb-[9px]"></div>
</div>

<!-- taskbar -->
<div class="mt-[9px] h-[39px] bg-[#202020] border-t border-[#444444] overflow-hidden">
  <div class="h-[58px] flex items-center pl-[796px] font-['Noto_Sans',sans-serif]">
    <svg class="w-[29px] h-[29px]" viewBox="0 0 29 29"><path fill="url(#gWin)" d="M0 0h14v14H0zM15 0h14v14H15zM0 15h14v14H0zM15 15h14v14H15z"/></svg>
    <div class="ml-[17px] w-[275px] h-[40px] rounded-full bg-[#414141] border border-[#5f5f5f] flex items-center pl-[14px] text-[15.500px] text-[#e4e4e4]">
      <svg class="w-[19px] h-[19px] mr-[12px] fill-[#585858] stroke-[#e6e6e6] stroke-2" viewBox="0 0 20 20"><circle cx="8.500" cy="8.500" r="7"/><path d="m14 14 5 5"/></svg><span class="tracking-[0.2px]">Search</span>
      <svg class="ml-auto mr-[7px] w-[60px] h-[34px]" viewBox="0 0 60 34"><path fill="none" stroke="#5d9450" stroke-width="2.500" d="M6 32Q3 20 2 12M10 34q1-14 5-24M5 22l-4-4M11 20l5-3M44 34q1-16 5-28M46 22l8-5M45 16l-5-4"/><path fill="none" stroke="#c9a03a" stroke-width="2" d="M14 30q2-12 6-18M50 32q2-8 7-14"/><path fill="#3f8f6a" d="M50 32q2-12 9-14-1 12-9 14z"/><circle cx="29" cy="8" r="7" fill="#6d4630"/><circle cx="22" cy="9" r="2.500" fill="#b98560"/><circle cx="36" cy="9" r="2.500" fill="#b98560"/><ellipse cx="29" cy="10" rx="4.500" ry="4.500" fill="#c99672"/><circle cx="27" cy="8.500" r="1" fill="#222"/><circle cx="31" cy="8.500" r="1" fill="#222"/><ellipse cx="29" cy="26" rx="8" ry="11" fill="#744a33"/><ellipse cx="29" cy="27" rx="4" ry="8" fill="#93664a"/></svg>
    </div>
    <svg class="ml-[15px] w-[30px] h-[30px]" viewBox="0 0 30 30"><path fill="#ececec" d="M8 1h22v24H8z"/><path fill="#8b8b8b" fill-opacity=".85" d="M0 10h23v20H0z"/></svg>
    <svg class="ml-[25px] w-[30px] h-[28px]" viewBox="0 0 30 28"><path fill="#d79a10" d="M0 3q0-3 3-3h8l3 4h14v8H0z"/><path fill="#fdd04a" d="M0 6h10l3-3h17v25H0z"/><path fill="#1477c8" d="M5 28v-4q0-3 3-3h13q3 0 3 3v4z"/></svg>
    <svg class="ml-[26px] w-[28px] h-[28px]" viewBox="0 0 28 28"><path fill="#2fa4d8" stroke="#fff" stroke-width="1" d="M14 1l13 13-13 13L1 14z"/><path fill="#fff" d="M9 8h3v6l5-6h4l-6 6.500 6 6h-4l-5-5v5H9z"/></svg>
    <svg class="ml-[27px] w-[28px] h-[28px]" viewBox="0 0 28 28"><circle cx="14" cy="14" r="13.500" fill="#fff"/><circle cx="14" cy="14" r="12.500" fill="#c31a25"/><path fill="none" stroke="#fff" stroke-width="2.600" stroke-linecap="round" d="M9.500 16c-4-7 3-10 6.500-9 5 1.500 4 10-.5 10-2 0-2.500-1-2.500-1M14.500 10.500 11.500 22"/></svg>
    <div class="ml-[16px] w-[49px] h-[50px] rounded-[6px] bg-[#2f2f2f] border border-[#3b3b3b] flex items-center justify-center"><svg class="w-[31px] h-[31px]" viewBox="0 0 30 30"><circle cx="15" cy="15" r="15" fill="#fcc934"/><path fill="#ea4335" d="M2 7.500A15 15 0 0 1 28 7.500H15L8.500 19z"/><path fill="#34a853" d="M2 7.500 8.500 18.800 15 22.500 14 30A15 15 0 0 1 2 7.500z"/><circle cx="15" cy="15" r="7.500" fill="#fff"/><circle cx="15" cy="15" r="6" fill="#3b7df0"/></svg></div>
    <svg class="ml-[16px] w-[29px] h-[29px]" viewBox="0 0 28 28"><circle cx="14" cy="14" r="14" fill="#1ed760"/><path fill="none" stroke="#1c1c1c" stroke-linecap="round" stroke-width="2.500" d="M6.500 10c5-1.700 11-1.200 15.500 1.500M7.200 14.500c4.500-1.200 9.500-.7 13.300 1.500M8 18.700c4-1 8-.5 11 1.300"/></svg>
    <svg class="ml-[26px] w-[30px] h-[30px]" viewBox="0 0 30 30"><path fill="#1070b3" d="M0 10l3-2 19 15v7L0 12z"/><path fill="#2489ca" d="M22 0v8L3 22l-3-2v-2z"/><path fill="#3c9fe8" d="M22 0l8 3v24l-8 3z"/></svg>
    <svg class="ml-[27px] w-[24px] h-[30px]" viewBox="0 0 24 30"><rect x="1" y="2" width="22" height="28" rx="2" fill="#4cb9dc"/><path stroke="#17698c" stroke-width="2" d="M5 11h14M5 16h14M5 21h14M5 26h9"/><path stroke="#0f4a66" stroke-width="2" d="M4 0v5M8 0v5M12 0v5M16 0v5M20 0v5"/></svg>
  </div>
</div>
</body>
</html>
